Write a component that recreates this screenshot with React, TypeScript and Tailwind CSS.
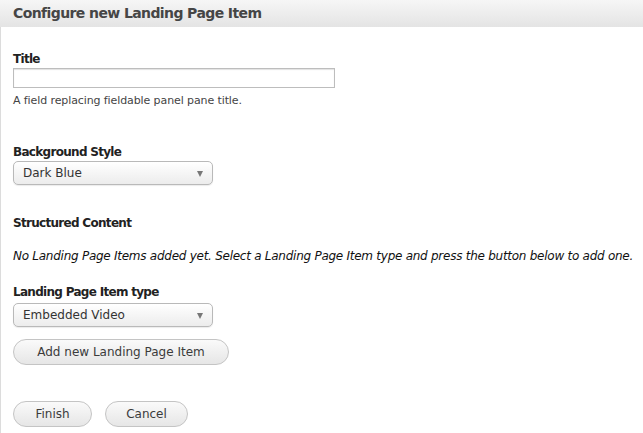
import React from "react";

function Select({ value }: { value: string }) {
  return (
    <div className="relative flex h-[24px] w-[200px] items-center rounded-[5px] border border-[#b9b9b9] bg-gradient-to-b from-[#ffffff] to-[#ececec] pl-[9px] text-[12px] text-[#333] shadow-[0_1px_1px_rgba(0,0,0,0.08)]">
      {value}
      <span className="absolute right-[9px] top-[9px] h-0 w-0 border-x-[3.5px] border-t-[6px] border-x-transparent border-t-[#777]" />
    </div>
  );
}

function PillButton({ label, width }: { label: string; width: string }) {
  return (
    <button
      className={`flex h-[26px] ${width} items-center justify-center rounded-full border border-[#c4c4c4] bg-gradient-to-b from-[#fafafa] to-[#e6e6e6] text-[12px] text-[#3b3b3b]`}
    >
      {label}
    </button>
  );
}

export default function App() {
  return (
    <div
      className="h-[433px] w-[643px] overflow-hidden bg-white text-[#222]"
      style={{ fontFamily: '"DejaVu Sans", Verdana, sans-serif' }}
    >
      {/* Header */}
      <div className="flex h-[27px] items-center bg-gradient-to-b from-[#f6f6f6] to-[#e4e4e4] pl-[13px] text-[14px] font-bold tracking-[-0.6px] text-[#454545]">
        Configure new Landing Page Item
      </div>

      <div className="h-[406px] border-l border-[#dcdcdc] pl-[12px]">
        {/* Title */}
        <div className="pt-[25px]">
          <div className="text-[12px] font-bold leading-[15px] tracking-[-0.7px]">Title</div>
          <div className="mt-[1px] h-[20px] w-[322px] border border-[#bdbdbd] bg-white shadow-[inset_0_1px_1px_rgba(0,0,0,0.12)]" />
          <div className="mt-[6px] text-[11px] leading-[14px] tracking-[-0.1px] text-[#444]">
            A field replacing fieldable panel pane title.
          </div>
        </div>

        {/* Background style */}
        <div className="pt-[37px]">
          <div className="text-[12px] font-bold leading-[15px] tracking-[-0.7px]">Background Style</div>
          <div className="mt-[1px]">
            <Select value="Dark Blue" />
          </div>
        </div>

        {/* Structured content */}
        <div className="pt-[31px] text-[12px] font-bold leading-[15px] tracking-[-0.7px]">Structured Content</div>
        <div className="pt-[18px] text-[12px] italic leading-[15px] text-[#111] tracking-[-0.26px]">
          No Landing Page Items added yet. Select a Landing Page Item type and press the button below to add one.
        </div>

        {/* Item type */}
        <div className="pt-[21px]">
          <div className="text-[12px] font-bold leading-[15px] tracking-[-0.7px]">Landing Page Item type</div>
          <div className="mt-[3px]">
            <Select value="Embedded Video" />
          </div>
          <div className="mt-[12px]">
            <PillButton label="Add new Landing Page Item" width="w-[216px]" />
          </div>
        </div>

        {/* Actions */}
        <div className="flex gap-[13px] pt-[36px]">
          <PillButton label="Finish" width="w-[79px]" />
          <PillButton label="Cancel" width="w-[83px]" />
        </div>
      </div>
    </div>
  );
}
